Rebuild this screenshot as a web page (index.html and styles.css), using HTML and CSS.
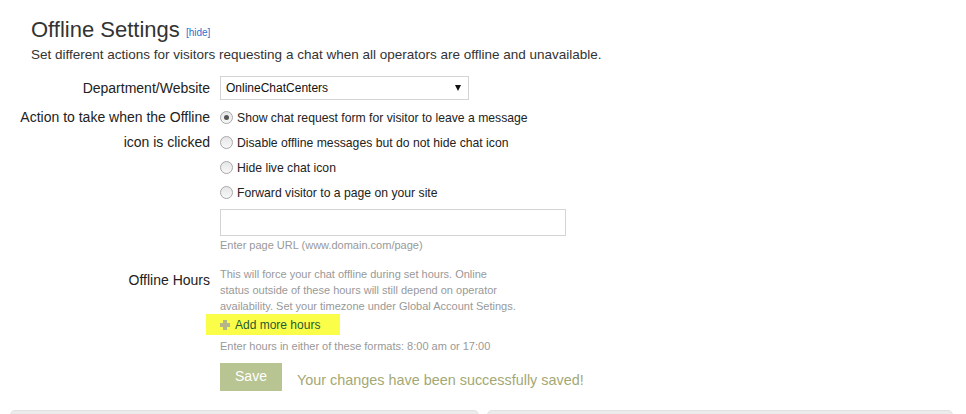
FILE: index.html
```html
<!DOCTYPE html>
<html>
<head>
<meta charset="utf-8">
<link rel="stylesheet" href="styles.css">
</head>
<body>
<div class="page">
  <div class="header">
    <h1 class="title">Offline Settings <a class="hide-link" href="#">[hide]</a></h1>
    <p class="subtitle">Set different actions for visitors requesting a chat when all operators are offline and unavailable.</p>
  </div>
  <div class="form">
    <div class="label label-dept">Department/Website</div>
    <div class="field">
      <div class="select">
        <span>OnlineChatCenters</span>
        <span class="arrow"></span>
      </div>
    </div>

    <div class="label label-action">Action to take when the Offline icon is clicked</div>
    <div class="field radios">
      <label class="radio-row"><span class="radio checked"></span>Show chat request form for visitor to leave a message</label>
      <label class="radio-row"><span class="radio"></span>Disable offline messages but do not hide chat icon</label>
      <label class="radio-row"><span class="radio"></span>Hide live chat icon</label>
      <label class="radio-row"><span class="radio"></span>Forward visitor to a page on your site</label>
      <div class="url-input"></div>
      <div class="hint url-hint">Enter page URL (www.domain.com/page)</div>
    </div>

    <div class="label label-hours">Offline Hours</div>
    <div class="field">
      <div class="hint hours-desc">This will force your chat offline during set hours. Online<br>status outside of these hours will still depend on operator<br>availability. Set your timezone under Global Account Setings.</div>
      <div class="add-more"><span class="plus"></span>Add more hours</div>
      <div class="hint formats">Enter hours in either of these formats: 8:00 am or 17:00</div>
      <div class="save-row">
        <button class="save-btn">Save</button>
        <span class="saved-msg">Your changes have been successfully saved!</span>
      </div>
    </div>
  </div>
  <div class="panels">
    <div class="panel"></div>
    <div class="panel"></div>
  </div>
</div>
</body>
</html>
```
FILE: styles.css
```css
html, body {
  margin: 0;
  padding: 0;
  background: #fff;
  font-family: "Liberation Sans", Arial, sans-serif;
  color: #222;
  overflow: hidden;
}
.page {
  width: 966px;
  height: 414px;
  overflow: hidden;
}
.header {
  padding: 17px 0 0 31px;
}
.title {
  margin: 0;
  font-size: 22px;
  font-weight: normal;
  line-height: 26px;
  color: #333;
}
.hide-link {
  font-size: 10px;
  color: #2a6fd0;
  text-decoration: none;
  vertical-align: 1px;
}
.subtitle {
  margin: 0;
  font-size: 13.5px;
  line-height: 18px;
  color: #333;
}
.form {
  display: grid;
  grid-template-columns: 210px 1fr;
  column-gap: 10px;
  margin-top: 12px;
}
.label {
  text-align: right;
  font-size: 14px;
  color: #222;
}
.label-dept {
  line-height: 24px;
}
.label-action {
  line-height: 25px;
  margin-top: 5px;
  padding-left: 12px;
}
.label-hours {
  margin-top: 17px;
  line-height: 20px;
}
.select {
  width: 242px;
  height: 22px;
  border: 1px solid #d4d4d4;
  display: flex;
  align-items: center;
  justify-content: space-between;
  padding: 0 0 0 5px;
  box-sizing: content-box;
  font-size: 12px;
  color: #111;
}
.arrow {
  width: 0;
  height: 0;
  border-left: 3.5px solid transparent;
  border-right: 3.5px solid transparent;
  border-top: 6px solid #111;
  margin-right: 7px;
}
.radios {
  margin-top: 5px;
}
.radio-row {
  display: flex;
  align-items: center;
  height: 25px;
  font-size: 12.2px;
  color: #222;
}
.radio {
  width: 11px;
  height: 11px;
  border-radius: 50%;
  border: 1px solid #a8a8a8;
  background: linear-gradient(#e6e6e6, #f8f8f8);
  margin-right: 4px;
  box-sizing: content-box;
  position: relative;
  flex: none;
}
.radio.checked::after {
  content: "";
  position: absolute;
  left: 3px;
  top: 3px;
  width: 5px;
  height: 5px;
  border-radius: 50%;
  background: #555;
}
.url-input {
  width: 344px;
  height: 25px;
  border: 1px solid #d4d4d4;
  margin-top: 4px;
}
.hint {
  font-size: 11px;
  color: #999;
  line-height: 16px;
}
.url-hint {
  margin-top: 1px;
}
.hours-desc {
  margin-top: 13px;
  white-space: nowrap;
}
.add-more {
  display: flex;
  align-items: center;
  width: 134px;
  height: 21px;
  margin-left: -14px;
  padding-left: 14px;
  box-sizing: border-box;
  background: #fbfe49;
  font-size: 12px;
  color: #1f5a32;
  margin-top: 0;
}
.plus {
  width: 10px;
  height: 10px;
  margin-right: 5px;
  position: relative;
  flex: none;
}
.plus::before, .plus::after {
  content: "";
  position: absolute;
  background: #b5b58a;
}
.plus::before {
  left: 3px;
  top: 0;
  width: 4px;
  height: 10px;
}
.plus::after {
  left: 0;
  top: 3px;
  width: 10px;
  height: 4px;
}
.formats {
  margin-top: 3px;
}
.save-row {
  display: flex;
  align-items: center;
  margin-top: 9px;
}
.save-btn {
  width: 62px;
  height: 28px;
  border: none;
  background: #b8c492;
  color: #fff;
  font-family: "Liberation Sans", Arial, sans-serif;
  font-size: 14px;
  padding: 0 0 3px 0;
  margin: 0;
}
.saved-msg {
  margin-left: 15px;
  font-size: 14.4px;
  color: #a4a874;
  padding-top: 5px;
}
.panels {
  display: flex;
  gap: 8px;
  padding: 0 13px 0 10px;
  margin-top: 19px;
}
.panel {
  height: 20px;
  background: #ececec;
  border: 1px solid #e2e2e2;
  border-radius: 5px 5px 0 0;
}
.panel:first-child {
  width: 467px;
}
.panel:last-child {
  flex: 1;
}
```
